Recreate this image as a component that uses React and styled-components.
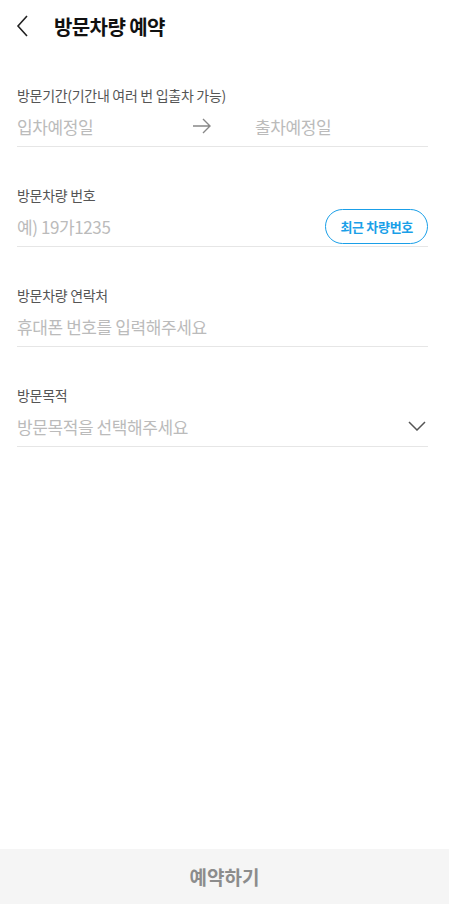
import styled, { createGlobalStyle } from "styled-components";

const GlobalStyle = createGlobalStyle`
  html, body {
    margin: 0;
    padding: 0;
    background: #fff;
  }
  body {
    font-family: "Noto Sans CJK KR", "Noto Sans", sans-serif;
  }
  * {
    box-sizing: border-box;
  }
`;

function BackIcon() {
  return (
    <svg width="14" height="22" viewBox="0 0 14 22" fill="none">
      <path d="M11 1 L2 11 L11 21" stroke="#222" strokeWidth="1.6" />
    </svg>
  );
}

function ArrowIcon() {
  return (
    <svg width="20" height="16" viewBox="0 0 20 16" fill="none">
      <path d="M1 8 H18 M11 1 L18 8 L11 15" stroke="#888" strokeWidth="1.4" />
    </svg>
  );
}

function ChevronDown() {
  return (
    <svg width="18" height="10" viewBox="0 0 18 10" fill="none">
      <path d="M1 1 L9 9 L17 1" stroke="#555" strokeWidth="1.5" />
    </svg>
  );
}

function App() {
  return (
    <Main>
      <GlobalStyle />
      <Header>
        <BackButton>
          <BackIcon />
        </BackButton>
        <Title>방문차량 예약</Title>
      </Header>
      <Form>
        <Section>
          <Label>방문기간(기간내 여러 번 입출차 가능)</Label>
          <DateRow>
            <DateText>입차예정일</DateText>
            <ArrowBox>
              <ArrowIcon />
            </ArrowBox>
            <DateText>출차예정일</DateText>
          </DateRow>
        </Section>
        <Section>
          <Label>방문차량 번호</Label>
          <Row>
            <Placeholder>예) 19가1235</Placeholder>
            <RecentButton>최근 차량번호</RecentButton>
          </Row>
        </Section>
        <Section>
          <Label>방문차량 연락처</Label>
          <Row>
            <Placeholder>휴대폰 번호를 입력해주세요</Placeholder>
          </Row>
        </Section>
        <Section>
          <Label>방문목적</Label>
          <Row>
            <Placeholder>방문목적을 선택해주세요</Placeholder>
            <ChevronBox>
              <ChevronDown />
            </ChevronBox>
          </Row>
        </Section>
      </Form>
      <SubmitBar>예약하기</SubmitBar>
    </Main>
  );
}

export default App;

const Main = styled.div`
  width: 100%;
  min-height: 100vh;
  display: flex;
  flex-direction: column;
`;

const Header = styled.div`
  height: 52px;
  display: flex;
  align-items: center;
  padding-left: 16px;
`;

const BackButton = styled.div`
  width: 38px;
  display: flex;
  align-items: center;
`;

const Title = styled.div`
  font-size: 20px;
  font-weight: 700;
  color: #111;
  letter-spacing: -0.6px;
`;

const Form = styled.div`
  padding: 33px 21px 0 17px;
  display: flex;
  flex-direction: column;
  gap: 38px;
`;

const Section = styled.div`
  display: flex;
  flex-direction: column;
`;

const Label = styled.div`
  font-size: 14px;
  line-height: 21px;
  color: #555;
  letter-spacing: -0.3px;
`;

const Row = styled.div`
  height: 41px;
  display: flex;
  align-items: center;
  justify-content: space-between;
  border-bottom: 1px solid #e6e6e6;
`;

const DateRow = styled(Row)`
  justify-content: flex-start;
`;

const Placeholder = styled.div`
  font-size: 17px;
  color: #bbb;
  letter-spacing: -0.4px;
`;

const DateText = styled(Placeholder)`
  width: 160px;
`;

const ArrowBox = styled.div`
  width: 78px;
  display: flex;
  padding-left: 15px;
`;

const RecentButton = styled.div`
  height: 35px;
  padding: 0 14px;
  display: flex;
  align-items: center;
  border: 1.5px solid #1a9fe8;
  border-radius: 18px;
  color: #1a9fe8;
  font-size: 13px;
  font-weight: 700;
  letter-spacing: -0.3px;
`;

const ChevronBox = styled.div`
  display: flex;
  padding-right: 2px;
`;

const SubmitBar = styled.div`
  margin-top: auto;
  height: 55px;
  background-color: #f5f5f5;
  display: flex;
  align-items: center;
  justify-content: center;
  font-size: 19px;
  font-weight: 700;
  color: #8c8c8c;
`;
